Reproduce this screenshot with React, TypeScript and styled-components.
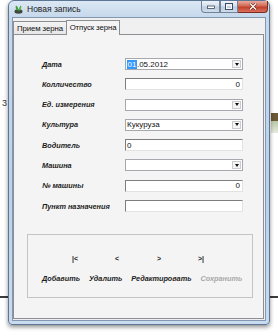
import styled, { createGlobalStyle } from 'styled-components';

const GlobalStyle = createGlobalStyle`
    html, body {
        margin: 0;
        padding: 0;
        background: #ffffff;
    }
    body {
        font-family: "Liberation Sans", Arial, sans-serif;
    }
    #root {
        width: 278px;
        height: 336px;
        overflow: hidden;
    }
`

const Desktop = styled.div`
    position: relative;
    width: 278px;
    height: 336px;
    box-sizing: border-box;
    padding-left: 8px;
    background:
        linear-gradient(#3c3c3c, #3c3c3c) 0 296px / 8px 2px no-repeat,
        linear-gradient(#3c3c3c, #3c3c3c) 270px 296px / 8px 2px no-repeat,
        linear-gradient(#6a5836, #6a5836) 271px 113px / 7px 8px no-repeat,
        linear-gradient(#b9c7a6, #e6ebdf) 271px 121px / 7px 12px no-repeat,
        #ffffff;
`

const BackText = styled.span`
    position: absolute;
    left: 2px;
    top: 98px;
    font-size: 9px;
    color: #333;
`

const Window = styled.div`
    width: 262px;
    height: 325px;
    box-sizing: border-box;
    display: flex;
    flex-direction: column;
    border: 1px solid #5d7696;
    border-radius: 6px 6px 4px 4px;
    background: linear-gradient(#dce7f3 0px, #c6d8ec 16px, #bcd1ea 60%, #c8dbef 100%);
    box-shadow: 0 2px 4px rgba(0, 0, 0, 0.45);
`

const TitleBar = styled.div`
    height: 16px;
    display: flex;
    align-items: flex-start;
    flex-shrink: 0;
`

const Caption = styled.div`
    display: flex;
    align-items: center;
    gap: 4px;
    padding: 3px 0 0 5px;
    font-size: 8.5px;
    color: #1b1b1b;
`

const CaptionButtons = styled.div`
    margin-left: auto;
    margin-right: 1px;
    display: flex;
    height: 12px;
`

const CapButton = styled.div<{ $close?: boolean; $w: number }>`
    width: ${p => p.$w}px;
    height: 12px;
    box-sizing: border-box;
    display: flex;
    align-items: center;
    justify-content: center;
    border: 1px solid ${p => (p.$close ? '#7c2c22' : '#71839a')};
    border-top: none;
    border-left-width: ${p => (p.$close ? 0 : 1)}px;
    border-radius: ${p => (p.$close ? '0 0 4px 0' : '0')};
    background: ${p => p.$close
        ? 'linear-gradient(#e9a99b, #d16b57 45%, #c2412b 55%, #d8705b)'
        : 'linear-gradient(#eef3f9, #d5e0ec 45%, #bccde1 55%, #cfdcea)'};
    &:first-child {
        border-radius: 0 0 0 4px;
    }
`

const Client = styled.div`
    flex: 1;
    margin: 0 3px 3px 3px;
    border: 1px solid #8397b0;
    background: #f0f0f0;
    display: flex;
    flex-direction: column;
    padding: 0 1px 1px 0;
`

const TabStrip = styled.div`
    height: 16px;
    display: flex;
    align-items: flex-end;
    flex-shrink: 0;
`

const Tab = styled.div<{ $active?: boolean }>`
    width: 54px;
    height: ${p => (p.$active ? 15 : 13)}px;
    box-sizing: border-box;
    display: flex;
    align-items: center;
    justify-content: center;
    border: 1px solid #8c8e94;
    border-bottom: none;
    margin-bottom: ${p => (p.$active ? -1 : 0)}px;
    margin-left: ${p => (p.$active ? -1 : 0)}px;
    position: relative;
    background: ${p => (p.$active ? '#f4f4f4' : 'linear-gradient(#f3f3f3, #e6e6e6)')};
    font-size: 7.8px;
    letter-spacing: -0.1px;
    white-space: nowrap;
    color: #111;
    padding-bottom: ${p => (p.$active ? 2 : 0)}px;
`

const TabPanel = styled.div`
    flex: 1;
    border: 1px solid #8c8e94;
    background: #f4f4f4;
    padding: 23px 0 0 13px;
`

const FormGrid = styled.div`
    margin-left: 15px;
    display: grid;
    grid-template-columns: 83px 118px;
    grid-auto-rows: 12px;
    row-gap: 8.3px;
    align-items: center;
`

const Label = styled.span`
    font-size: 7.3px;
    font-weight: bold;
    font-style: italic;
    color: #1c1c1c;
    white-space: nowrap;
`

const Field = styled.div<{ $align?: 'left' | 'right' }>`
    height: 12px;
    box-sizing: border-box;
    display: flex;
    align-items: center;
    justify-content: ${p => (p.$align === 'right' ? 'flex-end' : 'flex-start')};
    padding: 0 2px 0 1px;
    background: #ffffff;
    border-top: 1px solid #7e7e7e;
    border-left: 1px solid #7e7e7e;
    border-right: 1px solid #e2e2e2;
    border-bottom: 1px solid #e2e2e2;
    font-size: 8px;
    color: #111;
`

const Combo = styled.div`
    height: 12px;
    box-sizing: border-box;
    display: flex;
    align-items: center;
    background: #ffffff;
    border: 1px solid #a6a8ad;
    font-size: 8px;
    color: #111;
    padding-left: 1px;
`

const ComboText = styled.span`
    flex: 1;
    display: flex;
    align-items: center;
`

const Selected = styled.span`
    background: #3399ff;
    color: #ffffff;
    padding: 0 0.5px;
`

const DropButton = styled.span`
    width: 9px;
    height: 8px;
    margin-right: 1px;
    box-sizing: border-box;
    display: flex;
    align-items: center;
    justify-content: center;
    border: 1px solid #c9cbd0;
    background: #f4f4f4;
    &::after {
        content: '';
        border-left: 2.5px solid transparent;
        border-right: 2.5px solid transparent;
        border-top: 3px solid #111;
    }
`

const GroupBox = styled.div`
    margin-top: 22px;
    width: 226px;
    height: 64px;
    box-sizing: border-box;
    border: 1px solid #c4c4c4;
    padding-top: 18px;
`

const NavRow = styled.div`
    height: 10px;
    display: grid;
    grid-template-columns: repeat(4, 42px);
    padding-left: 26px;
    align-items: center;
`

const NavButton = styled.span`
    text-align: center;
    font-size: 7px;
    font-weight: bold;
    color: #1c1c1c;
`

const ActionRow = styled.div`
    margin-top: 10px;
    height: 10px;
    display: flex;
    align-items: center;
    gap: 9px;
    padding-left: 14px;
`

const Action = styled.span<{ $disabled?: boolean }>`
    font-size: 7.3px;
    font-weight: bold;
    font-style: italic;
    color: ${p => (p.$disabled ? '#a8a8a8' : '#1c1c1c')};
    white-space: nowrap;
`

function AppIcon() {
    return (
        <svg width="9" height="10" viewBox="0 0 9 10">
            <ellipse cx="4.5" cy="7.5" rx="4" ry="2.2" fill="#3d4a3c" />
            <path d="M4.5 7 C2 6 1 3.5 2 1.5 C3.5 2.5 4.3 4 4.5 7 Z" fill="#3f9a3a" />
            <path d="M4.5 7 C7 6 8 3.5 7 1.5 C5.5 2.5 4.7 4 4.5 7 Z" fill="#5cb84d" />
        </svg>
    );
}

function MinIcon() {
    return (
        <svg width="8" height="4" viewBox="0 0 8 4">
            <rect x="0.5" y="1" width="7" height="2.5" fill="#ffffff" stroke="#3a4a60" strokeWidth="0.8" />
        </svg>
    );
}

function MaxIcon() {
    return (
        <svg width="8" height="7" viewBox="0 0 8 7">
            <rect x="0.5" y="0.5" width="7" height="6" fill="none" stroke="#3a4a60" strokeWidth="1" />
            <rect x="1.5" y="2" width="5" height="3.6" fill="none" stroke="#ffffff" strokeWidth="0.9" />
        </svg>
    );
}

function CloseIcon() {
    return (
        <svg width="8" height="7" viewBox="0 0 8 7">
            <path d="M1 0.5 L7 6.5 M7 0.5 L1 6.5" stroke="#5a1a10" strokeWidth="2.4" />
            <path d="M1 0.5 L7 6.5 M7 0.5 L1 6.5" stroke="#ffffff" strokeWidth="1.3" />
        </svg>
    );
}

export default function App() {
    return (
        <>
            <GlobalStyle />
            <Desktop>
                <BackText>3</BackText>
                <Window>
                    <TitleBar>
                        <Caption>
                            <AppIcon />
                            <span>Новая запись</span>
                        </Caption>
                        <CaptionButtons>
                            <CapButton $w={19}><MinIcon /></CapButton>
                            <CapButton $w={18}><MaxIcon /></CapButton>
                            <CapButton $w={30} $close><CloseIcon /></CapButton>
                        </CaptionButtons>
                    </TitleBar>
                    <Client>
                        <TabStrip>
                            <Tab>Прием зерна</Tab>
                            <Tab $active>Отпуск зерна</Tab>
                        </TabStrip>
                        <TabPanel>
                            <FormGrid>
                                <Label>Дата</Label>
                                <Combo>
                                    <ComboText><Selected>01</Selected>.05.2012</ComboText>
                                    <DropButton />
                                </Combo>

                                <Label>Колличество</Label>
                                <Field $align="right">0</Field>

                                <Label>Ед. измерения</Label>
                                <Combo>
                                    <ComboText></ComboText>
                                    <DropButton />
                                </Combo>

                                <Label>Культура</Label>
                                <Combo>
                                    <ComboText>Кукуруза</ComboText>
                                    <DropButton />
                                </Combo>

                                <Label>Водитель</Label>
                                <Field>0</Field>

                                <Label>Машина</Label>
                                <Combo>
                                    <ComboText></ComboText>
                                    <DropButton />
                                </Combo>

                                <Label>№ машины</Label>
                                <Field $align="right">0</Field>

                                <Label>Пункт назначения</Label>
                                <Field></Field>
                            </FormGrid>

                            <GroupBox>
                                <NavRow>
                                    <NavButton>|&lt;</NavButton>
                                    <NavButton>&lt;</NavButton>
                                    <NavButton>&gt;</NavButton>
                                    <NavButton>&gt;|</NavButton>
                                </NavRow>
                                <ActionRow>
                                    <Action>Добавить</Action>
                                    <Action>Удалить</Action>
                                    <Action>Редактировать</Action>
                                    <Action $disabled>Сохранить</Action>
                                </ActionRow>
                            </GroupBox>
                        </TabPanel>
                    </Client>
                </Window>
            </Desktop>
        </>
    );
}
